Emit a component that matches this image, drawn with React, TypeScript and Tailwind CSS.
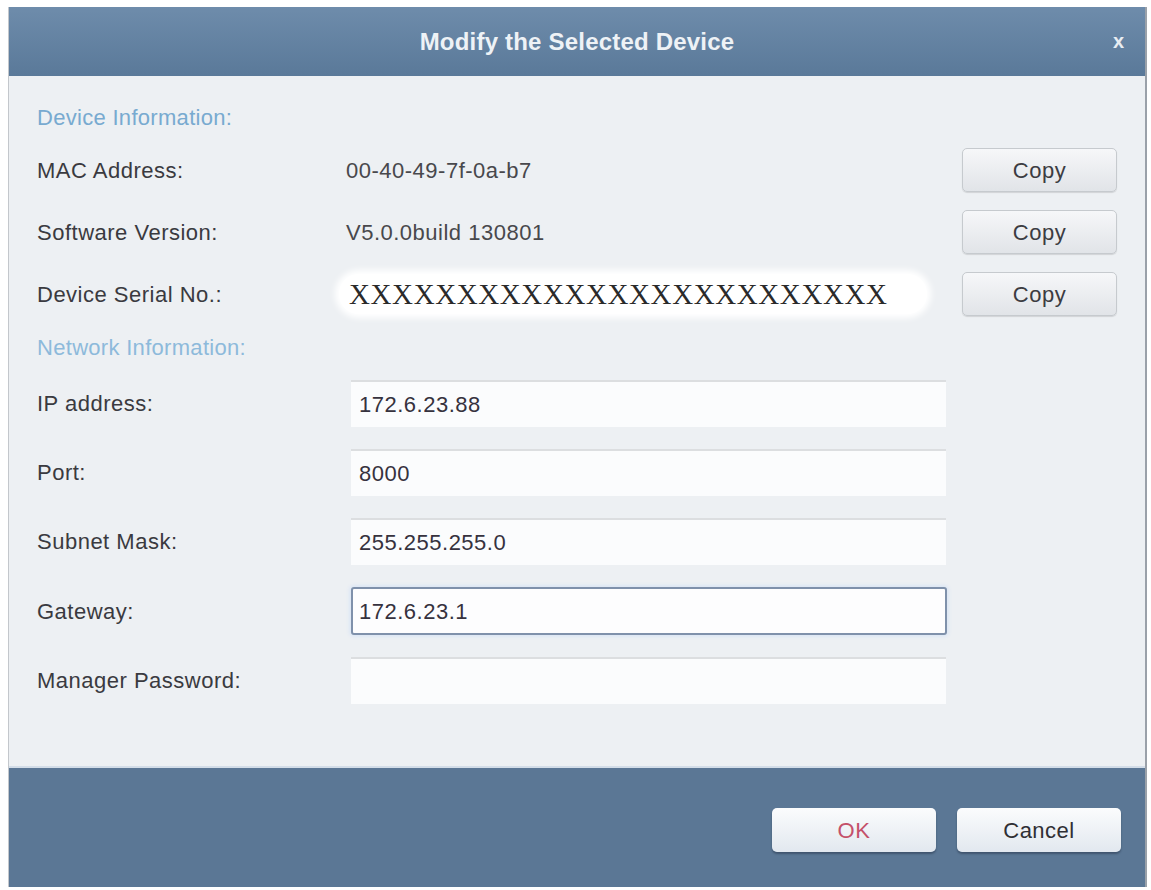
import React from "react";

const font = { fontFamily: '"Liberation Sans", Arial, sans-serif' };

const infoRows = [
  { label: "MAC Address:", value: "00-40-49-7f-0a-b7" },
  { label: "Software Version:", value: "V5.0.0build 130801" },
];

const netRows = [
  { label: "IP address:", value: "172.6.23.88" },
  { label: "Port:", value: "8000" },
  { label: "Subnet Mask:", value: "255.255.255.0" },
  { label: "Gateway:", value: "172.6.23.1", focused: true },
  { label: "Manager Password:", value: "" },
];

const CopyButton = () => (
  <button className="ml-auto h-[44px] w-[155px] rounded-[5px] border border-[#c6cace] bg-gradient-to-b from-[#f6f7f9] to-[#e1e4e8] text-[22px] tracking-[0.5px] text-[#3c3c42] shadow-[0_1px_1px_rgba(0,0,0,0.12)]">
    Copy
  </button>
);

const App = () => {
  return (
    <div className="h-[890px] w-[1151px] bg-white pl-2 pr-1 pt-[7px]" style={font}>
      <div className="flex h-[880px] flex-col border-l border-r-2 border-[#c3c7cc] border-r-[#9aa1a9]">
        {/* title bar */}
        <div className="relative flex h-[69px] items-center justify-center bg-gradient-to-b from-[#6e8cab] to-[#5a7999]">
          <span className="text-[24px] font-bold tracking-[0.2px] text-[#eef2f6]">
            Modify the Selected Device
          </span>
          <span className="absolute right-[21px] top-[24px] text-[20px] font-bold leading-none text-[#e8edf2]">
            x
          </span>
        </div>

        {/* body */}
        <div className="flex flex-1 flex-col bg-[#edf0f3] pl-[28px] pr-[28px] pt-[26px]">
          <div className="flex h-[30px] items-center text-[22px] tracking-[0.3px] text-[#78aad0]">
            Device Information:
          </div>

          <div className="mt-4 flex flex-col gap-[18px]">
            {infoRows.map((r) => (
              <div key={r.label} className="flex h-[44px] items-center text-[22px] tracking-[0.5px]">
                <div className="w-[309px] text-[#3a3a40]">{r.label}</div>
                <div className="text-[#48484c]">{r.value}</div>
                <CopyButton />
              </div>
            ))}
            <div className="flex h-[44px] items-center text-[22px] tracking-[0.5px]">
              <div className="w-[302px] text-[#3a3a40]">Device Serial No.:</div>
              <div className="flex h-[40px] w-[588px] items-center rounded-full bg-white pl-[10px] shadow-[0_0_6px_4px_#ffffff]">
                <span
                  className="text-[29px] leading-none tracking-[0.6px] text-[#2a2a2a]"
                  style={{ fontFamily: '"Liberation Serif", "Times New Roman", serif' }}
                >
                  XXXXXXXXXXXXXXXXXXXXXXXXX
                </span>
              </div>
              <CopyButton />
            </div>
          </div>

          <div className="mt-4 flex h-[30px] items-center text-[22px] tracking-[0.3px] text-[#8dbadb]">
            Network Information:
          </div>

          <div className="mt-[18px] flex flex-col gap-[22px]">
            {netRows.map((r) => (
              <div key={r.label} className="flex items-center text-[22px] tracking-[0.5px]">
                <div className="w-[314px] text-[#3a3a40]">{r.label}</div>
                <div
                  className={
                    r.focused
                      ? "flex h-[48px] w-[596px] items-center rounded-[3px] border-2 border-[#7f91ab] bg-[#fdfdfe] pl-[6px] text-[#36323e] shadow-[0_0_4px_1px_#d4e2f5]"
                      : "flex h-[47px] w-[595px] items-center border-t-2 border-[#dcdee0] bg-[#fbfcfd] pl-[8px] text-[#36323e]"
                  }
                >
                  {r.value}
                </div>
              </div>
            ))}
          </div>
        </div>

        {/* footer */}
        <div className="flex h-[121px] justify-end gap-[21px] border-t-2 border-[#d3dde8] bg-[#5b7795] pr-[24px] pt-[40px]">
          <button className="h-[44px] w-[164px] rounded-[5px] bg-gradient-to-b from-[#fbfcfd] to-[#e2e8ef] text-[22px] tracking-[0.5px] text-[#c4506a] shadow-[0_2px_2px_rgba(30,45,65,0.45)]">
            OK
          </button>
          <button className="h-[44px] w-[164px] rounded-[5px] bg-gradient-to-b from-[#fbfcfd] to-[#e2e8ef] text-[22px] tracking-[0.5px] text-[#2f2f34] shadow-[0_2px_2px_rgba(30,45,65,0.45)]">
            Cancel
          </button>
        </div>
      </div>
    </div>
  );
};

export default App;
